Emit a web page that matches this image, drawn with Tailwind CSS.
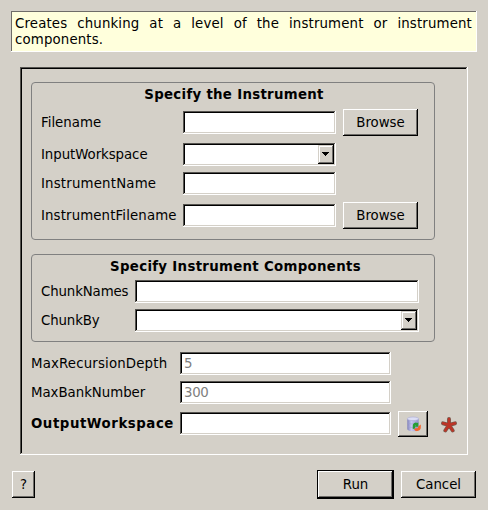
<!DOCTYPE html>
<html lang="en">
<head>
<meta charset="utf-8">
<title>Chunking</title>
<script src="https://cdn.jsdelivr.net/npm/@tailwindcss/browser@4"></script>
</head>
<body class="w-[488px] h-[510px] overflow-hidden bg-[#d4d0c8] font-['DejaVu_Sans',sans-serif] text-[13.33px] leading-4 text-black">
<div class="flex h-full flex-col pt-[11px]">
  <p class="ml-[11px] h-[41px] w-[466px] bg-[#ffffdc] pt-[5px] pr-[5px] pl-1 text-justify tracking-[0.15px] shadow-[inset_-1px_-1px_#fff,inset_1px_1px_#6e6c68]">Creates chunking at a level of the instrument or instrument components.</p>

  <main class="mt-[15px] ml-5 h-[388px] w-[448px] pt-[15px] pl-[11px] shadow-[inset_-1px_-1px_#fff,inset_1px_1px_#55534f,inset_-2px_-2px_#d4d0c8,inset_2px_2px_#000]">
    <section class="h-[158px] w-[404px] rounded-[4px] border border-[#808080] pt-[4px] pl-[9px]">
      <h2 class="mr-[7px] text-center font-bold tracking-[0.3px]">Specify the Instrument</h2>
      <div class="mt-[6px] flex h-[27px] items-center">
        <label class="w-[142px]">Filename</label>
        <div class="h-[23px] w-[153px] bg-white shadow-[inset_-1px_-1px_#fff,inset_1px_1px_#55534f,inset_-2px_-2px_#d4d0c8,inset_2px_2px_#000]"></div>
        <button class="ml-[7px] h-[27px] w-[75px] shadow-[inset_-1px_-1px_#000,inset_1px_1px_#fff,inset_-2px_-2px_#6e6c68]">Browse</button>
      </div>
      <div class="mt-[7px] flex h-[23px] items-center">
        <label class="w-[142px] tracking-[-0.06px]">InputWorkspace</label>
        <div class="flex h-[23px] w-[153px] justify-end bg-white p-[2px] shadow-[inset_-1px_-1px_#fff,inset_1px_1px_#55534f,inset_-2px_-2px_#d4d0c8,inset_2px_2px_#000]">
          <button class="flex h-[19px] w-4 justify-center bg-[#d4d0c8] pt-[7px] shadow-[inset_-1px_-1px_#000,inset_1px_1px_#d4d0c8,inset_-2px_-2px_#6e6c68,inset_2px_2px_#fff]"><svg class="mr-px h-1 w-[7px]" viewBox="0 0 7 4" shape-rendering="crispEdges"><path d="M0 0h7v1h-1v1h-1v1h-1v1h-1v-1h-1v-1h-1v-1h-1z"/></svg></button>
        </div>
      </div>
      <div class="mt-[6px] flex h-[23px] items-center">
        <label class="w-[142px] tracking-[0.18px]">InstrumentName</label>
        <div class="h-[23px] w-[153px] bg-white shadow-[inset_-1px_-1px_#fff,inset_1px_1px_#55534f,inset_-2px_-2px_#d4d0c8,inset_2px_2px_#000]"></div>
      </div>
      <div class="mt-[7px] flex h-[27px] items-center">
        <label class="w-[142px] tracking-[0.12px]">InstrumentFilename</label>
        <div class="h-[23px] w-[153px] bg-white shadow-[inset_-1px_-1px_#fff,inset_1px_1px_#55534f,inset_-2px_-2px_#d4d0c8,inset_2px_2px_#000]"></div>
        <button class="ml-[7px] h-[27px] w-[75px] shadow-[inset_-1px_-1px_#000,inset_1px_1px_#fff,inset_-2px_-2px_#6e6c68]">Browse</button>
      </div>
    </section>

    <section class="mt-[14px] h-[88px] w-[404px] rounded-[4px] border border-[#808080] pt-[4px] pl-[9px]">
      <h2 class="mr-[4px] text-center font-bold tracking-[0.31px]">Specify Instrument Components</h2>
      <div class="mt-[5px] flex h-[23px] items-center">
        <label class="w-[94px] tracking-[-0.12px]">ChunkNames</label>
        <div class="h-[23px] w-[284px] bg-white shadow-[inset_-1px_-1px_#fff,inset_1px_1px_#55534f,inset_-2px_-2px_#d4d0c8,inset_2px_2px_#000]"></div>
      </div>
      <div class="mt-[6px] flex h-[23px] items-center">
        <label class="w-[94px] tracking-[-0.12px]">ChunkBy</label>
        <div class="flex h-[23px] w-[284px] justify-end bg-white p-[2px] shadow-[inset_-1px_-1px_#fff,inset_1px_1px_#55534f,inset_-2px_-2px_#d4d0c8,inset_2px_2px_#000]">
          <button class="flex h-[19px] w-4 justify-center bg-[#d4d0c8] pt-[7px] shadow-[inset_-1px_-1px_#000,inset_1px_1px_#d4d0c8,inset_-2px_-2px_#6e6c68,inset_2px_2px_#fff]"><svg class="mr-px h-1 w-[7px]" viewBox="0 0 7 4" shape-rendering="crispEdges"><path d="M0 0h7v1h-1v1h-1v1h-1v1h-1v-1h-1v-1h-1v-1h-1z"/></svg></button>
        </div>
      </div>
    </section>

    <div class="mt-[10px] flex h-[23px] items-center">
      <label class="w-[149px] tracking-[0.16px]">MaxRecursionDepth</label>
      <div class="flex h-[23px] w-[211px] items-center bg-white pl-1 text-[#808080] shadow-[inset_-1px_-1px_#fff,inset_1px_1px_#55534f,inset_-2px_-2px_#d4d0c8,inset_2px_2px_#000]">5</div>
    </div>
    <div class="mt-[6px] flex h-[23px] items-center">
      <label class="w-[149px] tracking-[-0.03px]">MaxBankNumber</label>
      <div class="flex h-[23px] w-[211px] items-center bg-white pl-1 tracking-[-0.3px] text-[#808080] shadow-[inset_-1px_-1px_#fff,inset_1px_1px_#55534f,inset_-2px_-2px_#d4d0c8,inset_2px_2px_#000]">300</div>
    </div>
    <div class="mt-[7px] flex h-[26px] items-start">
      <label class="w-[149px] pt-[5px] font-bold tracking-[0.54px]">OutputWorkspace</label>
      <div class="mt-px h-[23px] w-[211px] bg-white shadow-[inset_-1px_-1px_#fff,inset_1px_1px_#55534f,inset_-2px_-2px_#d4d0c8,inset_2px_2px_#000]"></div>
      <button class="ml-[7px] flex h-[26px] w-[30px] pt-[5px] pl-2 shadow-[inset_-1px_-1px_#000,inset_1px_1px_#fff,inset_-2px_-2px_#6e6c68]" aria-label="Replace workspace">
        <svg class="h-4 w-4" viewBox="0 0 16 16">
          <defs><linearGradient id="cyl"><stop offset="0" stop-color="#7f80b8"/><stop offset=".35" stop-color="#c6c8ee"/><stop offset="1" stop-color="#9293cc"/></linearGradient></defs>
          <path d="M1.3 3v10c0 3 11.4 3 11.4 0V3z" fill="url(#cyl)"/>
          <ellipse cx="7" cy="2.8" rx="5.7" ry="1.8" fill="#dcdef5" stroke="#a9abd6" stroke-width=".6"/>
          <path d="M1.5 6.5c1 2 10 2 11 0M1.5 10c1 2 10 2 11 0" fill="none" stroke="#9a9cd0" stroke-width=".5"/>
          <path d="M6.8 13V9.5c0-3 4-3.8 4.2-2.5l1.3-.4v4.2H8.900l1.200-1.500c-1-.2-1 1-.9 3.200z" fill="#279e36"/>
          <path d="M14.800 8.500v3c0 3-3.200 3.500-4.800 3.700l-2-1.700 2.500-2v1c1.400 0 1.700-.8 1.600-2z" fill="#f4642c"/>
        </svg>
      </button>
      <svg class="mt-[6px] ml-[13px] h-4 w-4" viewBox="0 0 16 16" fill="none" stroke-linecap="round">
        <path d="M8 8V2M8 8L2 6.300M8 8L14 6.300M8 8L4.300 13.500M8 8L11.700 13.500" stroke="#765b50" stroke-width="3.900"/>
        <path d="M8 8V2M8 8L2 6.300M8 8L14 6.300M8 8L4.300 13.500M8 8L11.700 13.500" stroke="#bc3527" stroke-width="2.500"/>
      </svg>
    </div>
  </main>

  <footer class="mt-[15px] flex h-[29px] items-center pl-3">
    <button class="h-[27px] w-[23px] shadow-[inset_-1px_-1px_#000,inset_1px_1px_#fff,inset_-2px_-2px_#6e6c68]">?</button>
    <button class="ml-[282px] h-[29px] w-[77px] border border-black shadow-[inset_-1px_-1px_#000,inset_1px_1px_#fff,inset_-2px_-2px_#6e6c68]">Run</button>
    <button class="ml-[7px] h-[27px] w-[75px] shadow-[inset_-1px_-1px_#000,inset_1px_1px_#fff,inset_-2px_-2px_#6e6c68]">Cancel</button>
  </footer>
</div>
</body>
</html>
